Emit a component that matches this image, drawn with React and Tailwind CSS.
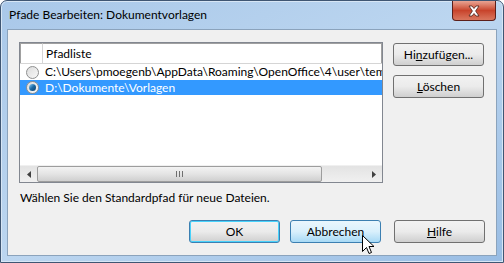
const font = { fontFamily: 'Lato, "Noto Sans", "Liberation Sans", sans-serif' };

function Radio({ checked }) {
  return (
    <span className="w-[13px] h-[13px] rounded-full border border-[#8e8f8f] bg-gradient-to-br from-[#dcdcdc] to-[#f8f8f8] flex items-center justify-center shrink-0">
      {checked && (
        <span className="w-[7px] h-[7px] rounded-full bg-gradient-to-br from-[#8ad4ff] via-[#1b6aa5] to-[#0f3f6c]" />
      )}
    </span>
  );
}

function Button({ children, variant }) {
  const styles =
    variant === "default"
      ? "border-[#3c7fb1] bg-gradient-to-b from-[#f2f2f2] via-[#ebebeb] to-[#cfcfcf] shadow-[inset_0_0_0_1px_#48d2fb]"
      : variant === "hover"
      ? "border-[#3c7fb1] bg-gradient-to-b from-[#eaf6fd] via-[#d9f0fc] to-[#a7d9f5]"
      : "border-[#707070] bg-gradient-to-b from-[#f2f2f2] via-[#ebebeb] to-[#cfcfcf]";
  return (
    <div
      className={`w-[91px] h-[23px] shrink-0 rounded-[3px] border flex items-center justify-center text-[12px] text-black ${styles}`}
    >
      {children}
    </div>
  );
}

function Cursor() {
  return (
    <svg className="absolute left-[362px] top-[235px]" width="13" height="21" viewBox="0 0 13 21">
      <path
        d="M0.5 0.5 L0.5 16.5 L4.5 12.5 L7 18.5 L9.5 17.5 L7 11.5 L12 11.5 Z"
        fill="#fff"
        stroke="#000"
        strokeWidth="1"
      />
    </svg>
  );
}

export default function App() {
  return (
    <div className="relative w-[504px] h-[263px] bg-white" style={font}>
      <div className="w-full h-full rounded-t-[7px] border border-[#3f5673] bg-gradient-to-br from-[#a9c8e9] via-[#bcd6f0] to-[#99bde4] flex flex-col px-[6px] pb-[6px] shadow-[inset_0_0_0_1px_#d7e6f5]">
        <div className="h-[28px] flex items-start justify-between">
          <div className="pt-[6px] pl-[2px] text-[12px] text-black leading-[16px]">
            Pfade Bearbeiten: Dokumentvorlagen
          </div>
          <div className="w-[44px] h-[20px] mr-[1px] rounded-b-[4px] border border-t-0 border-[#5c1f1a] bg-gradient-to-b from-[#e8a493] via-[#c8432b] to-[#d9765e] flex items-center justify-center">
            <svg width="14" height="12" viewBox="0 0 14 12">
              <path
                d="M2 1 L5 1 L7 3.5 L9 1 L12 1 L8.6 6 L12 11 L9 11 L7 8.5 L5 11 L2 11 L5.4 6 Z"
                fill="#fff"
                stroke="#4a1f18"
                strokeWidth="0.8"
              />
            </svg>
          </div>
        </div>
        <div className="flex-1 bg-[#f0f0f0] border border-[#8ba3bc] flex flex-col px-[11px] pt-[12px] pb-[12px]">
          <div className="flex gap-[10px]">
            <div className="w-[364px] h-[141px] shrink-0 border border-[#828790] bg-white flex flex-col overflow-hidden">
              <div className="h-[21px] flex border-b border-[#d5d5d5] text-[12px] text-black">
                <div className="w-[23px] shrink-0 border-r border-[#d5d5d5] border-l border-t border-l-[#a0a0a0] border-t-[#a0a0a0]" />
                <div className="flex-1 pl-[3px] flex items-center border-t border-[#a0a0a0] border-r border-r-[#a0a0a0]">
                  Pfadliste
                </div>
              </div>
              <div className="h-[16px] flex items-center text-[12px] text-black whitespace-nowrap">
                <div className="w-[24px] shrink-0 flex justify-center pl-[1px]">
                  <Radio />
                </div>
                <span className="pl-[1px]">C:\Users\pmoegenb\AppData\Roaming\OpenOffice\4\user\template</span>
              </div>
              <div className="h-[15px] flex items-center text-[12px] text-white bg-[#3399ff] whitespace-nowrap">
                <div className="w-[24px] shrink-0 flex justify-center pl-[1px]">
                  <Radio checked />
                </div>
                <span className="pl-[1px]">D:\Dokumente\Vorlagen</span>
              </div>
              <div className="flex-1" />
              <div className="h-[17px] bg-gradient-to-b from-[#e3e3e3] to-[#f0f0f0] flex items-center border-t border-[#f0f0f0]">
                <div className="w-[17px] flex items-center justify-center">
                  <svg width="4" height="7" viewBox="0 0 4 7">
                    <path d="M4 0 L0 3.5 L4 7 Z" fill="#404040" />
                  </svg>
                </div>
                <div className="w-[285px] h-[16px] rounded-[2px] border border-[#9d9d9d] bg-gradient-to-b from-[#f3f3f3] via-[#e4e4e4] to-[#cfcfcf] flex items-center justify-center">
                  <svg width="7" height="6" viewBox="0 0 7 6">
                    <path d="M0.5 0 V6 M3.5 0 V6 M6.5 0 V6" stroke="#6f6f6f" strokeWidth="1" />
                  </svg>
                </div>
                <div className="flex-1" />
                <div className="w-[17px] flex items-center justify-center">
                  <svg width="4" height="7" viewBox="0 0 4 7">
                    <path d="M0 0 L4 3.5 L0 7 Z" fill="#404040" />
                  </svg>
                </div>
              </div>
            </div>
            <div className="flex flex-col gap-[9px] pt-[1px]">
              <Button>
                <span>
                  Hi<span className="underline">n</span>zufügen...
                </span>
              </Button>
              <Button>
                <span>
                  <span className="underline">L</span>öschen
                </span>
              </Button>
            </div>
          </div>
          <div className="mt-[7px] pl-[1px] text-[12px] text-black leading-[16px]">
            Wählen Sie den Standardpfad für neue Dateien.
          </div>
          <div className="mt-auto flex justify-end">
            <Button variant="default">OK</Button>
            <div className="w-[10px] shrink-0" />
            <Button variant="hover">Abbrechen</Button>
            <div className="w-[13px] shrink-0" />
            <Button>
              <span>
                <span className="underline">H</span>ilfe
              </span>
            </Button>
          </div>
        </div>
      </div>
      <Cursor />
    </div>
  );
}
